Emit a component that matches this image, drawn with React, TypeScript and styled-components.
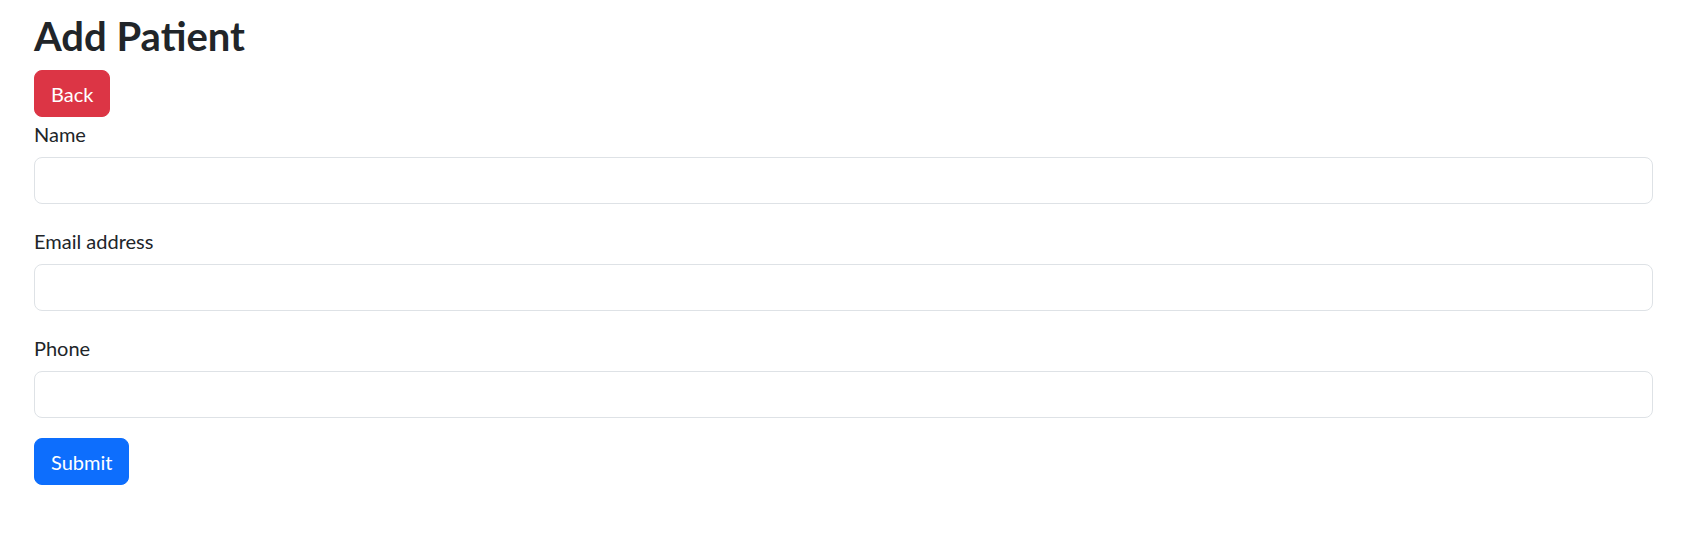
import React from "react";
import styled, { createGlobalStyle } from "styled-components";

const GlobalStyle = createGlobalStyle`
  * { box-sizing: border-box; }
  body {
    margin: 0;
    background: #fff;
    color: #212529;
    font-family: Lato, "Open Sans", Arial, sans-serif;
  }
`;

const Page = styled.div`
  padding: 12px 32px 0 34px;
`;

const Title = styled.h1`
  margin: 0 0 10px;
  font-size: 40px;
  line-height: 48px;
  font-weight: 700;
  color: #212529;
`;

const Button = styled.button<{ $variant: "danger" | "primary" }>`
  display: inline-block;
  height: 47px;
  padding: 0 16px;
  border: 1px solid ${(p) => (p.$variant === "danger" ? "#dc3545" : "#0d6efd")};
  background: ${(p) => (p.$variant === "danger" ? "#dc3545" : "#0d6efd")};
  color: #fff;
  font-family: inherit;
  font-size: 20px;
  line-height: 30px;
  border-radius: 8px;
  cursor: pointer;
`;

const Form = styled.form`
  display: flex;
  flex-direction: column;
  align-items: flex-start;
  margin-top: 2px;
`;

const Field = styled.div`
  width: 100%;
  margin-bottom: 22px;
  &:last-of-type {
    margin-bottom: 20px;
  }
`;

const Label = styled.label`
  display: block;
  margin-bottom: 8px;
  font-size: 20px;
  line-height: 30px;
  color: #212529;
`;

const Input = styled.input`
  display: block;
  width: 100%;
  height: 47px;
  padding: 0 16px;
  border: 1px solid #dee2e6;
  border-radius: 8px;
  font-family: inherit;
  font-size: 20px;
  color: #212529;
  background: #fff;
  outline: none;
`;

const fields = [
  { id: "name", label: "Name", type: "text" },
  { id: "email", label: "Email address", type: "email" },
  { id: "phone", label: "Phone", type: "tel" },
];

export default function App() {
  return (
    <Page>
      <GlobalStyle />
      <Title>Add Patient</Title>
      <Button $variant="danger" type="button">Back</Button>
      <Form onSubmit={(e) => e.preventDefault()}>
        {fields.map((f) => (
          <Field key={f.id}>
            <Label htmlFor={f.id}>{f.label}</Label>
            <Input id={f.id} type={f.type} />
          </Field>
        ))}
        <Button $variant="primary" type="submit">Submit</Button>
      </Form>
    </Page>
  );
}
